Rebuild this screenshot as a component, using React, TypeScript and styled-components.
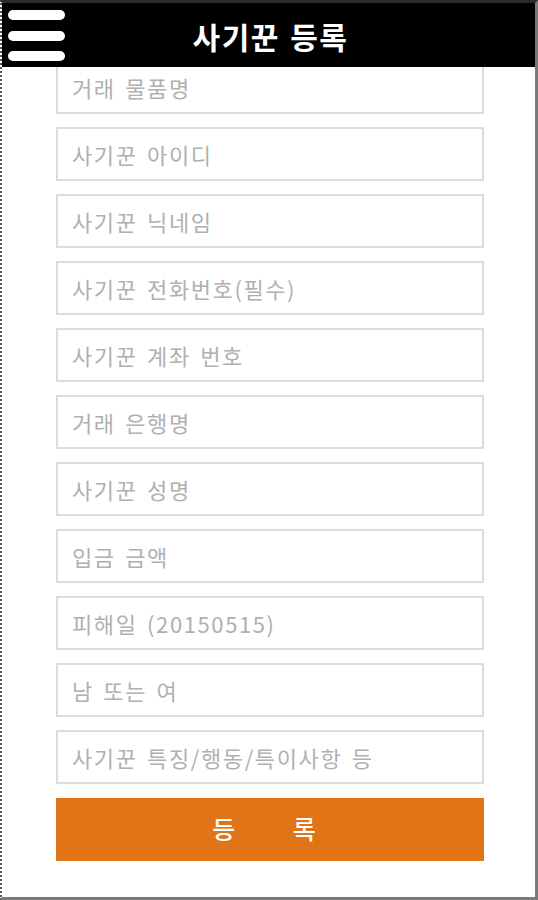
import React from 'react';
import styled, { createGlobalStyle } from 'styled-components';

const fields = [
  '거래 물품명',
  '사기꾼 아이디',
  '사기꾼 닉네임',
  '사기꾼 전화번호(필수)',
  '사기꾼 계좌 번호',
  '거래 은행명',
  '사기꾼 성명',
  '입금 금액',
  '피해일 (20150515)',
  '남 또는 여',
  '사기꾼 특징/행동/특이사항 등',
];

const GlobalStyle = createGlobalStyle`
  html, body {
    margin: 0;
    padding: 0;
    background: #ffffff;
  }
  * {
    box-sizing: border-box;
  }
`;

const Frame = styled.div`
  position: relative;
  width: 538px;
  height: 900px;
  overflow: hidden;
  border-top: 3px solid #2b2b2b;
  border-left: 2px dotted #555555;
  border-right: 3px solid #7a7a7a;
  border-bottom: 3px solid #7a7a7a;
  background: #ffffff;
  font-family: 'Noto Sans CJK KR', 'Noto Sans', sans-serif;
`;

const Header = styled.header`
  position: absolute;
  top: 0;
  left: 0;
  right: 0;
  height: 64px;
  background: #000000;
  display: flex;
  align-items: center;
  justify-content: center;
  z-index: 2;
`;

const Menu = styled.button`
  position: absolute;
  left: 6px;
  top: 7px;
  width: 57px;
  height: 51px;
  padding: 0;
  border: none;
  background: transparent;
  display: flex;
  flex-direction: column;
  justify-content: space-between;
`;

const Bar = styled.span`
  display: block;
  width: 57px;
  height: 10px;
  border-radius: 5px;
  background: #ffffff;
`;

const Title = styled.h1`
  margin: 2px 0 0 4px;
  color: #ffffff;
  font-size: 30px;
  font-weight: 700;
  letter-spacing: 1.5px;
  word-spacing: 2px;
`;

const Form = styled.form`
  display: flex;
  flex-direction: column;
  gap: 13px;
  padding: 57px 51px 0 54px;
`;

const Field = styled.input`
  width: 428px;
  height: 54px;
  padding: 0 14px;
  border: 2px solid #dcdcdc;
  border-radius: 0;
  background: #ffffff;
  font-family: inherit;
  font-size: 22px;
  letter-spacing: 1.6px;
  word-spacing: 3px;
  color: #444444;
  outline: none;

  &::placeholder {
    color: #b0b0b0;
  }
`;

const Submit = styled.button`
  margin-top: 1px;
  width: 428px;
  height: 63px;
  border: none;
  background: #e07416;
  color: #ffffff;
  font-family: inherit;
  font-size: 25px;
  font-weight: 500;
  word-spacing: 52px;
  padding: 0 12px 4px 0;
`;

export default function App() {
  return (
    <>
      <GlobalStyle />
      <Frame>
        <Header>
          <Menu type="button" aria-label="menu">
            <Bar />
            <Bar />
            <Bar />
          </Menu>
          <Title>사기꾼 등록</Title>
        </Header>
        <Form onSubmit={(e) => e.preventDefault()}>
          {fields.map((f) => (
            <Field key={f} placeholder={f} />
          ))}
          <Submit type="submit">등 록</Submit>
        </Form>
      </Frame>
    </>
  );
}
